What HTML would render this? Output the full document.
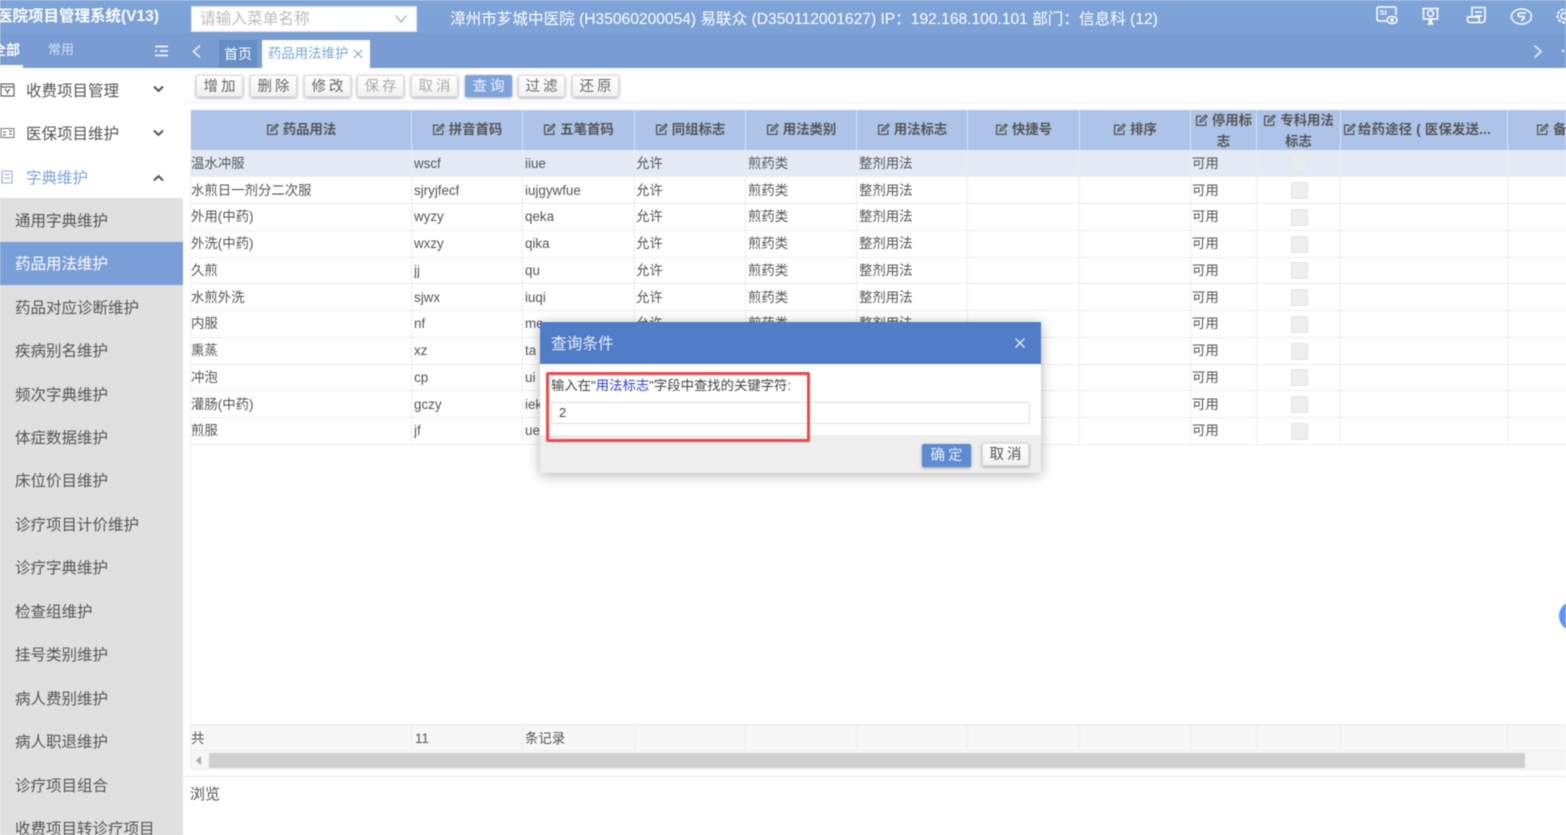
<!DOCTYPE html>
<html lang="zh">
<head>
<meta charset="utf-8">
<title>药品用法维护</title>
<style>
html,body{margin:0;padding:0;width:1566px;height:835px;overflow:hidden;background:#fff}
body{font-family:"Liberation Sans","Noto Sans CJK SC",sans-serif;font-size:13px;color:#555;position:relative}
#w{position:absolute;left:0;top:0;width:1566px;height:835px;overflow:hidden;filter:blur(.5px)}
.a{position:absolute;white-space:nowrap}
.top{left:0;top:0;width:1566px;height:33px;background:linear-gradient(#7fa4da,#7da2d8)}
.nav{left:0;top:33px;width:1566px;height:35px;background:#799dd3}
.side{left:0;top:198px;width:183px;height:637px;background:#e0e0e0}
.sel{left:0;top:242px;width:183px;height:43px;background:#7a9fd8}
.mi{left:15px;font-size:15.500px;line-height:20px;color:#555}
.mh{left:26px;font-size:15.500px;line-height:20px;color:#555}
.btn{top:75px;height:22px;line-height:22px;box-sizing:border-box;border:1px solid #ddd;border-radius:2px;background:linear-gradient(#fff,#f1f1f1);box-shadow:0 1px 3px rgba(0,0,0,.35);text-align:center;font-size:14.500px;letter-spacing:3px;text-indent:3px;color:#666}
.btn.d{color:#aaa}
.hd{left:191px;top:110px;width:1375px;height:40px;background:#adc4e8}
.hc{top:110px;height:40px;line-height:40px;text-align:center;font-size:13.400px;font-weight:bold;color:#555;border-right:1px solid #d4e0f2;box-sizing:content-box}
.hc svg,.h2 svg{width:13px;height:13px;vertical-align:-2px;margin-right:4px}
.h2{top:110px;height:40px;line-height:21px;text-align:center;font-size:13.400px;font-weight:bold;color:#555;border-right:1px solid #d4e0f2;white-space:normal}
.row{left:191px;width:1375px;height:26px;border-bottom:1px solid #ececec}
.c{top:.5px;font-size:13.400px;line-height:26px;color:#555;overflow:hidden}
.v{top:0;width:1px;height:26.750px;background:#ececec}
.ck{left:1100px;top:5px;width:17px;height:17px;background:#eee;border:1px solid #e3e3e3;border-radius:2px;box-sizing:border-box}
</style>
</head>
<body>
<div id="w">
<svg width="0" height="0" style="position:absolute"><symbol id="e" viewBox="0 0 12 12"><path d="M10 6.500V10.500H1.500V2H6M4.500 7.500L5 5.500 10 1l1.200 1.200L6.500 7z" fill="none" stroke="#555" stroke-width="1.200"/></symbol></svg>

<div class="a top"></div>
<div class="a nav"></div>
<div class="a" style="left:-3px;top:8px;font-size:15.500px;line-height:18px;font-weight:bold;color:#fff">医院项目管理系统(V13)</div>
<div class="a" style="left:191px;top:6px;width:226px;height:26px;background:#fff;border:1px solid #dfe6f2;box-sizing:border-box"></div>
<div class="a" style="left:200px;top:11px;font-size:15.700px;line-height:18px;color:#bbb">请输入菜单名称</div>
<svg class="a" style="left:394px;top:14px" width="14" height="10"><path d="M1.500 1.500L7 8l5.500-6.500" fill="none" stroke="#aaa" stroke-width="1.300"/></svg>
<div class="a" style="left:450px;top:11px;font-size:15.600px;line-height:18px;color:#fff">漳州市芗城中医院 (H35060200054) 易联众 (D350112001627) IP：192.168.100.101 部门：信息科 (12)</div>

<svg class="a" style="left:1376px;top:6px" width="24" height="20" fill="none" stroke="#fff" stroke-width="1.500"><path d="M11 15H3q-2 0-2-2V3q0-2 2-2H18q2 0 2 2V9"/><ellipse cx="16" cy="14" rx="5" ry="3.500"/><circle cx="16" cy="14" r="1" fill="#fff"/><text x="3.500" y="9" font-size="7.500" font-weight="bold" fill="#fff" stroke="none">SI</text></svg>
<svg class="a" style="left:1421px;top:7px" width="20" height="19" fill="none" stroke="#fff" stroke-width="1.500"><path d="M1 1.500h17M2.500 1.500v10.500h14V1.500"/><circle cx="9.500" cy="6.500" r="3"/><path d="M9.500 12v4" stroke-width="3.500"/><path d="M6.500 17h6"/></svg>
<svg class="a" style="left:1466px;top:6px" width="21" height="20" fill="none" stroke="#fff" stroke-width="1.500"><path d="M6 11V1.500h13V13q0 3.500-3 3.500H4q-2.500 0-2.500-2.500V11H13v5M9 6h7M9 10h7"/></svg>
<svg class="a" style="left:1510px;top:7px" width="23" height="19" fill="none" stroke="#fff" stroke-width="1.500"><ellipse cx="11.500" cy="9.500" rx="10" ry="7.500"/><path d="M16 6H10q-2 0-2 1.700T10 9.500h4q1 2.500-3 4"/></svg>
<svg class="a" style="left:1553px;top:6px" width="16" height="20" fill="none" stroke="#fff" stroke-width="2"><circle cx="11" cy="10" r="6.500" stroke-dasharray="3 1.500"/><circle cx="11" cy="10" r="3" stroke-width="1.500"/></svg>

<div class="a" style="left:-8px;top:42px;font-size:14px;line-height:16px;font-weight:bold;color:#fff">全部</div>
<div class="a" style="left:0;top:65px;width:23px;height:3px;background:#fff"></div>
<div class="a" style="left:48px;top:42px;font-size:13px;line-height:16px;color:#d5e1f3">常用</div>
<svg class="a" style="left:155px;top:45px" width="14" height="12" fill="none" stroke="#fff" stroke-width="1.600"><path d="M0 1.500h13M5 6h8M0 10.500h13M0 6h2"/></svg>
<svg class="a" style="left:191px;top:44px" width="12" height="15" fill="none" stroke="#fff" stroke-width="1.300"><path d="M9 1.500L2.500 7.500 9 13.500"/></svg>
<div class="a" style="left:219px;top:40px;width:38px;height:28px;background:#668dc4;text-align:center;line-height:28px;font-size:14px;color:#fff">首页</div>
<div class="a" style="left:262px;top:40px;width:108px;height:28px;background:#fff;line-height:28px;font-size:13.400px;color:#7fa4da;padding-left:6px;box-sizing:border-box">药品用法维护</div>
<svg class="a" style="left:353px;top:49px" width="10" height="10" fill="none" stroke="#7fa4da" stroke-width="1.200"><path d="M1 1l8 8M9 1l-8 8"/></svg>
<svg class="a" style="left:1532px;top:44px" width="12" height="15" fill="none" stroke="#fff" stroke-width="1.300"><path d="M2.500 1.500L9 7.500 2.500 13.500"/></svg>
<div class="a" style="left:1562px;top:50px;width:2px;height:2px;background:#fff"></div>

<svg class="a" style="left:0;top:82px" width="16" height="16" fill="none" stroke="#666" stroke-width="1.200"><path d="M1 2h13v12H1zM1 5h13M5 7l2.500 3L10 7M7.500 10v2"/></svg>
<div class="a mh" style="top:80px;margin-top:2px">收费项目管理</div>
<svg class="a" style="left:153px;top:85px" width="11" height="8" fill="none" stroke="#555" stroke-width="2"><path d="M1 1.500L5.500 6 10 1.500"/></svg>
<svg class="a" style="left:0;top:127px" width="16" height="12" fill="none" stroke="#777" stroke-width="1"><path d="M1 1.500h13v9H1z"/><path d="M3 8h3M3 5h3M9 4h3M9 7h3" stroke-width="1.300"/></svg>
<div class="a mh" style="top:123px;margin-top:2px">医保项目维护</div>
<svg class="a" style="left:153px;top:129px" width="11" height="8" fill="none" stroke="#555" stroke-width="2"><path d="M1 1.500L5.500 6 10 1.500"/></svg>
<svg class="a" style="left:0;top:169px" width="14" height="16" fill="none" stroke="#9fb9e2" stroke-width="1.300"><path d="M2 2h10v12H2zM4 5.500h6M4 9h6"/></svg>
<div class="a mh" style="top:167px;margin-top:2px;color:#7fa4da">字典维护</div>
<svg class="a" style="left:153px;top:174px" width="11" height="8" fill="none" stroke="#555" stroke-width="2"><path d="M1 6.500L5.500 2 10 6.500"/></svg>

<div class="a side"></div>
<div class="a sel"></div>
<div class="a mi" style="top:212px">通用字典维护</div>
<div class="a mi" style="top:255px;color:#fff">药品用法维护</div>
<div class="a mi" style="top:299px">药品对应诊断维护</div>
<div class="a mi" style="top:342px">疾病别名维护</div>
<div class="a mi" style="top:386px">频次字典维护</div>
<div class="a mi" style="top:429px">体症数据维护</div>
<div class="a mi" style="top:472px">床位价目维护</div>
<div class="a mi" style="top:516px">诊疗项目计价维护</div>
<div class="a mi" style="top:559px">诊疗字典维护</div>
<div class="a mi" style="top:603px">检查组维护</div>
<div class="a mi" style="top:646px">挂号类别维护</div>
<div class="a mi" style="top:690px">病人费别维护</div>
<div class="a mi" style="top:733px">病人职退维护</div>
<div class="a mi" style="top:777px">诊疗项目组合</div>
<div class="a mi" style="top:820px">收费项目转诊疗项目</div>

<div class="a btn" style="left:196px;width:47px">增加</div>
<div class="a btn" style="left:250px;width:47px">删除</div>
<div class="a btn" style="left:304px;width:47px">修改</div>
<div class="a btn d" style="left:357px;width:47px">保存</div>
<div class="a btn d" style="left:411px;width:47px">取消</div>
<div class="a btn" style="left:465px;width:47px;background:#7ea3da;border-color:#7ea3da;color:#eef3fb">查询</div>
<div class="a btn" style="left:518px;width:47px">过滤</div>
<div class="a btn" style="left:572px;width:47px">还原</div>
<div class="a" style="left:184px;top:102px;width:1382px;height:1px;background:#eee"></div>

<div class="a hd"></div>
<div class="a hc" style="left:191px;width:220px"><svg><use href="#e"/></svg>药品用法</div>
<div class="a hc" style="left:412px;width:110px"><svg><use href="#e"/></svg>拼音首码</div>
<div class="a hc" style="left:523px;width:111px"><svg><use href="#e"/></svg>五笔首码</div>
<div class="a hc" style="left:635px;width:110px"><svg><use href="#e"/></svg>同组标志</div>
<div class="a hc" style="left:746px;width:110px"><svg><use href="#e"/></svg>用法类别</div>
<div class="a hc" style="left:857px;width:110px"><svg><use href="#e"/></svg>用法标志</div>
<div class="a hc" style="left:968px;width:111px"><svg><use href="#e"/></svg>快捷号</div>
<div class="a hc" style="left:1080px;width:110px"><svg><use href="#e"/></svg>排序</div>
<div class="a h2" style="left:1191px;width:65px"><svg><use href="#e"/></svg>停用标志</div>
<div class="a h2" style="left:1257px;width:83px"><svg><use href="#e"/></svg>专科用法<br>标志</div>
<div class="a hc" style="left:1341px;width:164px;padding-left:2px;text-align:left;letter-spacing:.2px"><svg style="margin-right:2px"><use href="#e"/></svg>给药途径 ( 医保发送...</div>
<div class="a hc" style="left:1508px;width:100px"><svg><use href="#e"/></svg>备注</div>

<div class="a row" style="top:150px;background:#e3eaf5"><span class="a c" style="left:0">温水冲服</span><span class="a c" style="left:223px">wscf</span><span class="a c" style="left:334px">iiue</span><span class="a c" style="left:445px">允许</span><span class="a c" style="left:557px">煎药类</span><span class="a c" style="left:668px">整剂用法</span><span class="a c" style="left:1001px">可用</span><span class="a ck" style="background:#e9ecf1;border-color:#e3e7ee"></span></div>
<div class="a row" style="top:177px"><span class="a c" style="left:0">水煎日一剂分二次服</span><span class="a c" style="left:223px">sjryjfecf</span><span class="a c" style="left:334px">iujgywfue</span><span class="a c" style="left:445px">允许</span><span class="a c" style="left:557px">煎药类</span><span class="a c" style="left:668px">整剂用法</span><span class="a c" style="left:1001px">可用</span><span class="a ck"></span></div>
<div class="a row" style="top:203.750px"><span class="a c" style="left:0">外用(中药)</span><span class="a c" style="left:223px">wyzy</span><span class="a c" style="left:334px">qeka</span><span class="a c" style="left:445px">允许</span><span class="a c" style="left:557px">煎药类</span><span class="a c" style="left:668px">整剂用法</span><span class="a c" style="left:1001px">可用</span><span class="a ck"></span></div>
<div class="a row" style="top:230.500px"><span class="a c" style="left:0">外洗(中药)</span><span class="a c" style="left:223px">wxzy</span><span class="a c" style="left:334px">qika</span><span class="a c" style="left:445px">允许</span><span class="a c" style="left:557px">煎药类</span><span class="a c" style="left:668px">整剂用法</span><span class="a c" style="left:1001px">可用</span><span class="a ck"></span></div>
<div class="a row" style="top:257.250px"><span class="a c" style="left:0">久煎</span><span class="a c" style="left:223px">jj</span><span class="a c" style="left:334px">qu</span><span class="a c" style="left:445px">允许</span><span class="a c" style="left:557px">煎药类</span><span class="a c" style="left:668px">整剂用法</span><span class="a c" style="left:1001px">可用</span><span class="a ck"></span></div>
<div class="a row" style="top:284px"><span class="a c" style="left:0">水煎外洗</span><span class="a c" style="left:223px">sjwx</span><span class="a c" style="left:334px">iuqi</span><span class="a c" style="left:445px">允许</span><span class="a c" style="left:557px">煎药类</span><span class="a c" style="left:668px">整剂用法</span><span class="a c" style="left:1001px">可用</span><span class="a ck"></span></div>
<div class="a row" style="top:310.750px"><span class="a c" style="left:0">内服</span><span class="a c" style="left:223px">nf</span><span class="a c" style="left:334px">me</span><span class="a c" style="left:445px">允许</span><span class="a c" style="left:557px">煎药类</span><span class="a c" style="left:668px">整剂用法</span><span class="a c" style="left:1001px">可用</span><span class="a ck"></span></div>
<div class="a row" style="top:337.500px"><span class="a c" style="left:0">熏蒸</span><span class="a c" style="left:223px">xz</span><span class="a c" style="left:334px">ta</span><span class="a c" style="left:1001px">可用</span><span class="a ck"></span></div>
<div class="a row" style="top:364.250px"><span class="a c" style="left:0">冲泡</span><span class="a c" style="left:223px">cp</span><span class="a c" style="left:334px">ui</span><span class="a c" style="left:1001px">可用</span><span class="a ck"></span></div>
<div class="a row" style="top:391px"><span class="a c" style="left:0">灌肠(中药)</span><span class="a c" style="left:223px">gczy</span><span class="a c" style="left:334px">iek</span><span class="a c" style="left:1001px">可用</span><span class="a ck"></span></div>
<div class="a row" style="top:417.750px"><span class="a c" style="left:0">煎服</span><span class="a c" style="left:223px">jf</span><span class="a c" style="left:334px">ue</span><span class="a c" style="left:1001px">可用</span><span class="a ck"></span></div>

<div class="a" style="left:411px;top:150px;width:1px;height:294px;background:#ececec"></div>
<div class="a" style="left:522px;top:150px;width:1px;height:294px;background:#ececec"></div>
<div class="a" style="left:634px;top:150px;width:1px;height:294px;background:#ececec"></div>
<div class="a" style="left:745px;top:150px;width:1px;height:294px;background:#ececec"></div>
<div class="a" style="left:856px;top:150px;width:1px;height:294px;background:#ececec"></div>
<div class="a" style="left:967px;top:150px;width:1px;height:294px;background:#ececec"></div>
<div class="a" style="left:1079px;top:150px;width:1px;height:294px;background:#ececec"></div>
<div class="a" style="left:1190px;top:150px;width:1px;height:294px;background:#ececec"></div>
<div class="a" style="left:1256px;top:150px;width:1px;height:294px;background:#ececec"></div>
<div class="a" style="left:1340px;top:150px;width:1px;height:294px;background:#ececec"></div>
<div class="a" style="left:1507px;top:150px;width:1px;height:294px;background:#ececec"></div>

<div class="a" style="left:190px;top:110px;width:1px;height:660px;background:#eee"></div>
<div class="a" style="left:191px;top:724px;width:1375px;height:27px;background:#f7f7f7;border-top:1px solid #ececec;border-bottom:1px solid #ececec;box-sizing:border-box"></div>
<div class="a c" style="left:191px;top:726px">共</div>
<div class="a c" style="left:415px;top:726px">11</div>
<div class="a c" style="left:525px;top:726px">条记录</div>
<div class="a" style="left:411px;top:724px;width:1px;height:27px;background:#ececec"></div>
<div class="a" style="left:522px;top:724px;width:1px;height:27px;background:#ececec"></div>
<div class="a" style="left:634px;top:724px;width:1px;height:27px;background:#ececec"></div>
<div class="a" style="left:745px;top:724px;width:1px;height:27px;background:#ececec"></div>
<div class="a" style="left:856px;top:724px;width:1px;height:27px;background:#ececec"></div>
<div class="a" style="left:967px;top:724px;width:1px;height:27px;background:#ececec"></div>
<div class="a" style="left:1079px;top:724px;width:1px;height:27px;background:#ececec"></div>
<div class="a" style="left:1190px;top:724px;width:1px;height:27px;background:#ececec"></div>
<div class="a" style="left:1256px;top:724px;width:1px;height:27px;background:#ececec"></div>
<div class="a" style="left:1340px;top:724px;width:1px;height:27px;background:#ececec"></div>
<div class="a" style="left:1507px;top:724px;width:1px;height:27px;background:#ececec"></div>
<div class="a" style="left:191px;top:751px;width:1375px;height:19px;background:#f6f6f6;border-bottom:1px solid #ececec;box-sizing:border-box"></div>
<div class="a" style="left:209px;top:753px;width:1316px;height:15px;background:#cfcfcf"></div>
<svg class="a" style="left:196px;top:756px" width="6" height="9"><path d="M5 0v9L0 4.500z" fill="#aaa"/></svg>
<div class="a" style="left:184px;top:776px;width:1382px;height:1px;background:#e6e6e6"></div>
<div class="a" style="left:190px;top:786px;font-size:15px;line-height:18px;color:#555">浏览</div>
<div class="a" style="left:1559px;top:601px;width:30px;height:30px;border-radius:50%;background:#5b96f0"></div>

<div class="a" style="left:540px;top:322px;width:501px;height:151px;background:#fff;box-shadow:0 2px 12px rgba(0,0,0,.3)"></div>
<div class="a" style="left:540px;top:322px;width:501px;height:42px;background:#4f7dc8"></div>
<div class="a" style="left:551px;top:335px;font-size:15.700px;line-height:20px;color:#e8eef8">查询条件</div>
<svg class="a" style="left:1015px;top:338px" width="10" height="10" fill="none" stroke="#e8eef8" stroke-width="1.300"><path d="M.5.500l9 9M9.500.500l-9 9"/></svg>
<div class="a" style="left:540px;top:435px;width:501px;height:38px;background:#eee"></div>
<div class="a" style="left:551px;top:376px;font-size:13.350px;line-height:20px;color:#444">输入在"<span style="color:#2f3fd0">用法标志</span>"字段中查找的关键字符:</div>
<div class="a" style="left:551px;top:402px;width:479px;height:22px;background:#fff;border:1px solid #ddd;border-radius:2px;box-sizing:border-box;line-height:20px;padding-left:7px;font-size:13px;color:#444">2</div>
<div class="a btn" style="left:922px;top:444px;width:49px;height:23px;background:#5c8bd2;border-color:#5c8bd2;color:#e8eef8;line-height:23px">确定</div>
<div class="a btn" style="left:982px;top:443px;width:47px;height:23px;line-height:23px;color:#555">取消</div>
<div class="a" style="left:546px;top:372px;width:264px;height:70px;border:3px solid #f4474b;border-radius:2px;box-sizing:border-box"></div>
</div>
</body>
</html>
